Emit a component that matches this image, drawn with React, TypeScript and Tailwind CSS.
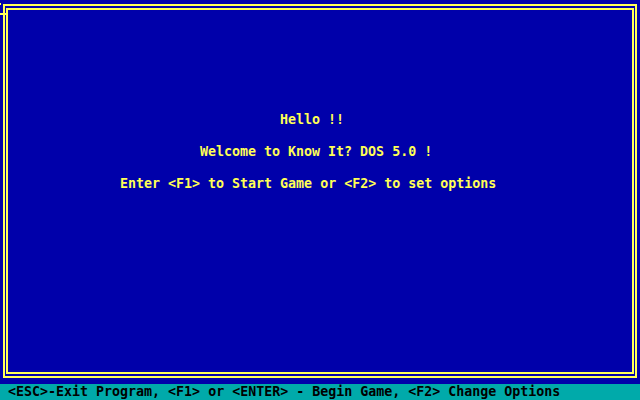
const mono = { fontFamily: '"DejaVu Sans Mono", "Liberation Mono", monospace' };

export default function App() {
  return (
    <div
      className="w-[640px] h-[400px] flex flex-col bg-[#0000aa] overflow-hidden font-bold text-[13.3px] leading-4"
      style={mono}
    >
      {/* main text-mode window */}
      <div className="relative h-[384px] pt-[4px] pl-[3px] pr-[3px] pb-[6px]">
        {/* stray cursor mark at the corner */}
        <div className="absolute left-0 top-[3px] w-[1px] h-[2px] bg-[#ffff55]" />
        <div className="absolute left-0 top-[13px] w-[8px] h-[2px] bg-[#ffff55]" />

        <div className="h-full border-2 border-[#ffff55] pt-[2px] px-[1px] pb-[2px]">
          <div className="h-full border-2 border-[#ffff55] text-[#ffff55] pt-[102px]">
            <div className="ml-[272px] whitespace-pre">Hello !!</div>
            <div className="ml-[192px] mt-4 whitespace-pre">Welcome to Know It? DOS 5.0 !</div>
            <div className="ml-[112px] mt-4 whitespace-pre">Enter &lt;F1&gt; to Start Game or &lt;F2&gt; to set options</div>
          </div>
        </div>
      </div>

      {/* status line */}
      <div className="h-4 bg-[#00aaaa] text-black pl-2 whitespace-pre">
        &lt;ESC&gt;-Exit Program, &lt;F1&gt; or &lt;ENTER&gt; - Begin Game, &lt;F2&gt; Change Options
      </div>
    </div>
  );
}
